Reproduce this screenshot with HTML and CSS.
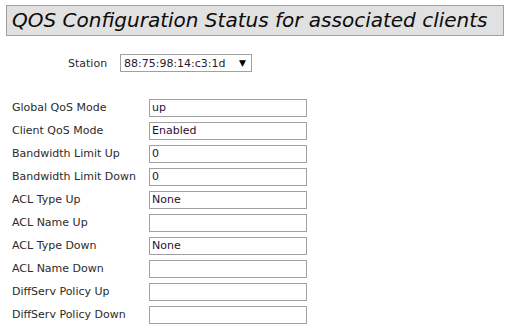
FILE: index.html
```html
<!DOCTYPE html>
<html>
<head>
<meta charset="utf-8">
<link rel="stylesheet" href="styles.css">
</head>
<body>
<div class="page">
  <h1 class="title">QOS Configuration Status for associated clients</h1>
  <div class="station-row">
    <span class="station-label">Station</span>
    <div class="select"><span class="select-value">88:75:98:14:c3:1d</span><span class="arrow">▼</span></div>
  </div>
  <div class="fields">
    <div class="label">Global QoS Mode</div><div class="input">up</div>
    <div class="label">Client QoS Mode</div><div class="input">Enabled</div>
    <div class="label">Bandwidth Limit Up</div><div class="input">0</div>
    <div class="label">Bandwidth Limit Down</div><div class="input">0</div>
    <div class="label">ACL Type Up</div><div class="input">None</div>
    <div class="label">ACL Name Up</div><div class="input"></div>
    <div class="label">ACL Type Down</div><div class="input">None</div>
    <div class="label">ACL Name Down</div><div class="input"></div>
    <div class="label">DiffServ Policy Up</div><div class="input"></div>
    <div class="label">DiffServ Policy Down</div><div class="input"></div>
  </div>
</div>
</body>
</html>
```

FILE: styles.css
```css
html, body {
  margin: 0;
  padding: 0;
  background: #ffffff;
}
.page {
  padding: 5px 0 0 6px;
  font-family: "DejaVu Sans", Verdana, sans-serif;
  font-size: 11px;
  color: #2b2b2b;
}
.title {
  margin: 0;
  width: 498px;
  height: 31px;
  box-sizing: border-box;
  border: 1px solid #a0a0a0;
  background: #e1e1e1;
  font-size: 20px;
  font-style: italic;
  font-weight: normal;
  color: #0c0c0c;
  line-height: 29px;
  padding-left: 5px;
  white-space: nowrap;
}
.station-row {
  display: flex;
  align-items: center;
  margin-top: 18px;
  padding-left: 62px;
  height: 18px;
}
.station-label {
  width: 52px;
}
.select {
  display: flex;
  align-items: center;
  width: 132px;
  height: 18px;
  box-sizing: border-box;
  border: 1px solid #a0a0a0;
  padding-left: 3px;
  color: #2a1a30;
}
.select-value {
  flex: 1;
}
.arrow {
  font-size: 9px;
  padding-right: 5px;
  color: #000;
}
.fields {
  display: grid;
  grid-template-columns: 137px 158px;
  row-gap: 5px;
  margin-top: 27px;
  padding-left: 6px;
  align-items: center;
}
.label {
  line-height: 18px;
}
.input {
  height: 18px;
  box-sizing: border-box;
  border: 1px solid #a0a0a0;
  padding-left: 2px;
  line-height: 16px;
  color: #2a1030;
}
```
